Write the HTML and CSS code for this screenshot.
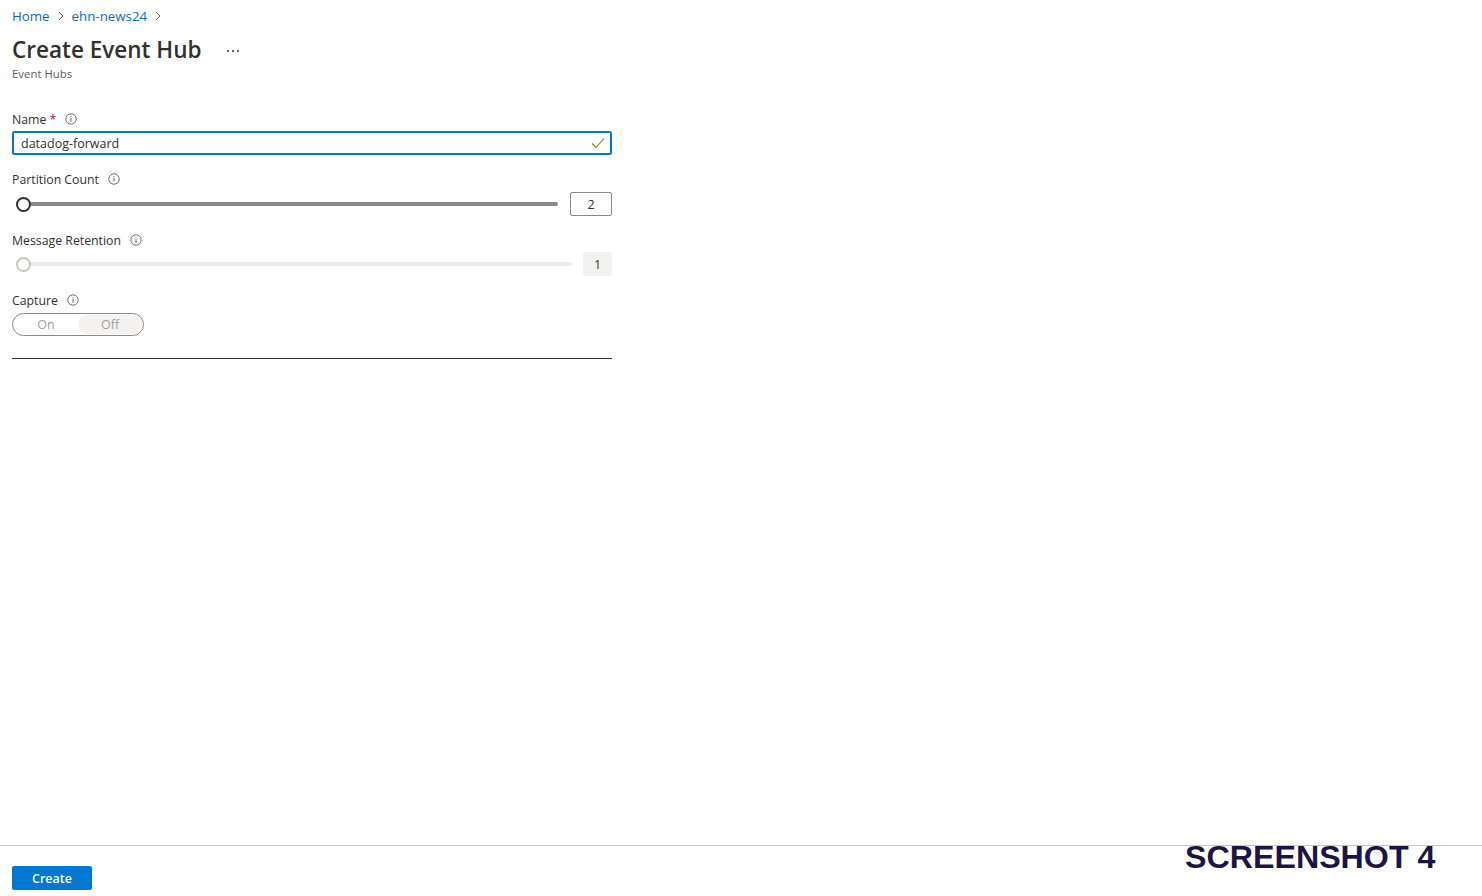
FILE: index.html
```html
<!DOCTYPE html>
<html lang="en">
<head>
<meta charset="utf-8">
<title>Create Event Hub</title>
<link rel="stylesheet" href="styles.css">
</head>
<body>
<div class="page">
  <main class="content">
    <nav class="breadcrumb">
      <a class="crumb" href="#">Home</a>
      <svg class="chev" width="8" height="10" viewBox="0 0 8 10"><path d="M2 1l4 4-4 4" fill="none" stroke="#605e5c" stroke-width="1"/></svg>
      <a class="crumb" href="#">ehn-news24</a>
      <svg class="chev" width="8" height="10" viewBox="0 0 8 10"><path d="M2 1l4 4-4 4" fill="none" stroke="#605e5c" stroke-width="1"/></svg>
    </nav>
    <header class="title-row">
      <h1 class="title">Create Event Hub</h1>
      <svg class="more" width="14" height="4" viewBox="0 0 14 4"><circle cx="2" cy="2" r="1" fill="#323130"/><circle cx="7" cy="2" r="1" fill="#323130"/><circle cx="12" cy="2" r="1" fill="#323130"/></svg>
    </header>
    <div class="subtitle">Event Hubs</div>

    <form class="form">
      <div class="field field-first">
        <div class="label">Name <span class="req">*</span>
          <svg class="info" width="12" height="12" viewBox="0 0 12 12"><circle cx="6" cy="6" r="5.2" fill="none" stroke="#605e5c" stroke-width="0.9"/><rect x="5.5" y="5" width="1" height="3.6" fill="#605e5c"/><rect x="5.5" y="3.2" width="1" height="1" fill="#605e5c"/></svg>
        </div>
        <div class="input">
          <span class="input-text">datadog-forward</span>
          <svg class="check" width="14" height="12" viewBox="0 0 14 12"><path d="M1 6.5l4 4L13 1.5" fill="none" stroke="#57a300" stroke-width="1.1"/></svg>
        </div>
      </div>

      <div class="field">
        <div class="label">Partition Count
          <svg class="info" width="12" height="12" viewBox="0 0 12 12"><circle cx="6" cy="6" r="5.2" fill="none" stroke="#605e5c" stroke-width="0.9"/><rect x="5.5" y="5" width="1" height="3.6" fill="#605e5c"/><rect x="5.5" y="3.2" width="1" height="1" fill="#605e5c"/></svg>
        </div>
        <div class="slider-row">
          <div class="slider">
            <span class="thumb"></span>
            <span class="track"></span>
          </div>
          <div class="value-box">2</div>
        </div>
      </div>

      <div class="field">
        <div class="label">Message Retention
          <svg class="info" width="12" height="12" viewBox="0 0 12 12"><circle cx="6" cy="6" r="5.2" fill="none" stroke="#605e5c" stroke-width="0.9"/><rect x="5.5" y="5" width="1" height="3.6" fill="#605e5c"/><rect x="5.5" y="3.2" width="1" height="1" fill="#605e5c"/></svg>
        </div>
        <div class="slider-row slider-row-disabled">
          <div class="slider slider-disabled">
            <span class="thumb"></span>
            <span class="track"></span>
          </div>
          <div class="value-box value-box-disabled">1</div>
        </div>
      </div>

      <div class="field">
        <div class="label">Capture
          <svg class="info" width="12" height="12" viewBox="0 0 12 12"><circle cx="6" cy="6" r="5.2" fill="none" stroke="#605e5c" stroke-width="0.9"/><rect x="5.5" y="5" width="1" height="3.6" fill="#605e5c"/><rect x="5.5" y="3.2" width="1" height="1" fill="#605e5c"/></svg>
        </div>
        <div class="toggle">
          <span class="opt">On</span>
          <span class="opt opt-selected">Off</span>
        </div>
      </div>

      <hr class="divider">
    </form>
  </main>

  <footer class="footer">
    <button class="btn-primary" type="button">Create</button>
    <div class="stamp">SCREENSHOT 4</div>
  </footer>
</div>
</body>
</html>
```

FILE: styles.css
```css
* { box-sizing: border-box; }

html, body {
  margin: 0;
  padding: 0;
  background: #ffffff;
}

body {
  font-family: "Segoe UI", "Open Sans", "Noto Sans", sans-serif;
  color: #323130;
}

.page {
  height: 100vh;
  display: flex;
  flex-direction: column;
}

.content {
  flex: 1;
  padding: 6px 12px 0;
}

.breadcrumb {
  display: flex;
  align-items: center;
  gap: 7px;
  height: 20px;
  font-size: 13.3px;
}

.crumb {
  color: #0f6cbd;
  text-decoration: none;
}

.chev { display: block; }

.title-row {
  display: flex;
  align-items: center;
  margin-top: 8px;
  height: 32px;
}

.title {
  margin: 0;
  font-size: 22.5px;
  font-weight: 600;
  line-height: 32px;
  color: #323130;
}

.more {
  display: block;
  margin-left: 25px;
  margin-top: 1px;
}

.subtitle {
  font-size: 11.4px;
  line-height: 16px;
  color: #605e5c;
}

.form {
  width: 600px;
}

.field { margin-top: 15px; }
.field-first { margin-top: 28px; }

.label {
  display: flex;
  align-items: center;
  height: 18px;
  font-size: 12.3px;
  color: #323130;
}

.req {
  color: #a4262c;
  margin-left: 3px;
}

.info { margin-left: 9px; display: block; }

.input {
  margin-top: 3px;
  height: 24px;
  border: 2px solid #0078d4;
  border-radius: 2px;
  display: flex;
  align-items: center;
  justify-content: space-between;
  padding: 0 5px 0 7px;
  font-size: 12.5px;
}

.input-text { color: #323130; }

.slider-row {
  margin-top: 4px;
  display: flex;
  align-items: center;
  height: 24px;
}

.slider-row-disabled { margin-top: 3px; }

.slider {
  flex: 1;
  display: flex;
  align-items: center;
  padding-left: 4px;
}

.thumb {
  width: 15px;
  height: 15px;
  border: 2px solid #323130;
  border-radius: 50%;
  background: #fff;
  flex: none;
  position: relative;
  z-index: 1;
}

.track {
  flex: 1;
  height: 4px;
  background: #8a8886;
  border-radius: 2px;
  margin-left: -1px;
}

.slider-disabled .thumb { border-color: #c8c6c4; }
.slider-disabled .track { background: #edebe9; }

.value-box {
  width: 42px;
  height: 24px;
  margin-left: 12px;
  border: 1px solid #8a8886;
  border-radius: 2px;
  display: flex;
  align-items: center;
  justify-content: center;
  font-size: 12.5px;
  color: #323130;
}

.value-box-disabled {
  width: 29px;
  margin-left: 11px;
  border: none;
  background: #f3f2f1;
}

.toggle {
  margin-top: 4px;
  width: 132px;
  height: 23px;
  border: 1px solid #8a8886;
  border-radius: 12px;
  display: flex;
  align-items: center;
  padding: 1px;
}

.opt {
  flex: 1;
  height: 19px;
  border-radius: 10px;
  display: flex;
  align-items: center;
  justify-content: center;
  font-size: 12.5px;
  color: #a19f9d;
}

.opt-selected { background: #f3f2f1; }

.divider {
  margin: 22px 0 0;
  border: none;
  border-top: 1px solid #323130;
  height: 0;
}

.footer {
  position: relative;
  border-top: 1px solid #c8c6c4;
  padding: 20px 12px 6px;
}

.btn-primary {
  width: 80px;
  height: 24px;
  border: none;
  border-radius: 2px;
  background: #0078d4;
  color: #fff;
  font-family: inherit;
  font-size: 12.5px;
  font-weight: 600;
  padding: 0;
}

.stamp {
  position: absolute;
  left: 1185px;
  top: -7px;
  font-family: "Liberation Sans", Arial, sans-serif;
  font-weight: 700;
  font-size: 32.2px;
  color: #1b1547;
  letter-spacing: 0;
}
```
